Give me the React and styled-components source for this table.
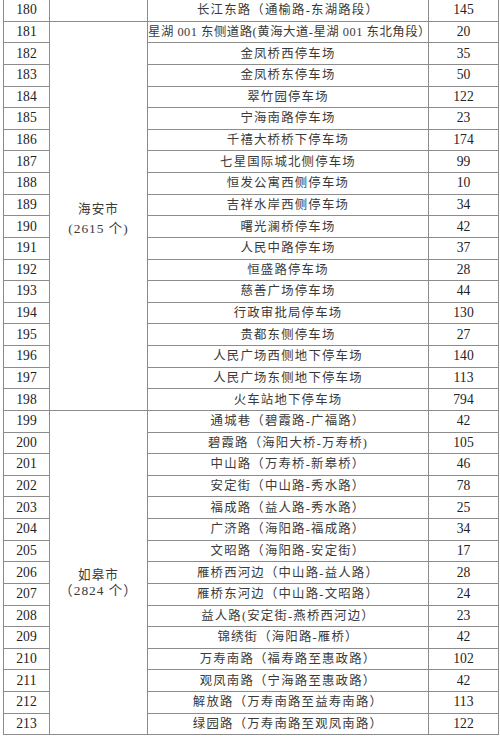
import styled, { createGlobalStyle } from "styled-components";

const GlobalStyle = createGlobalStyle`
  html, body {
    margin: 0;
    padding: 0;
    background: #fff;
  }
`;

const Page = styled.div`
  padding: 0 2px 0 3px;
  margin-top: -1px;
  font-family: "Liberation Serif", "Noto Sans CJK SC", serif;
  color: #2b2b2b;
`;

const Table = styled.table`
  width: 495px;
  border-collapse: collapse;
  table-layout: fixed;
`;

const Row = styled.tr`
  height: 21.64px;
`;

const Cell = styled.td`
  border: 1px solid #8c8c8c;
  padding: 0;
  text-align: center;
  vertical-align: middle;
  font-size: ${(p) => (p.$num ? "13.6px" : "12.4px")};
  line-height: 14px;
  white-space: nowrap;
  color: ${(p) => (p.$num ? "#222" : "#3a3a3a")};
  letter-spacing: ${(p) => p.$spacing || 0}px;
`;

const City = styled.div`
  display: flex;
  flex-direction: column;
  align-items: center;
  gap: ${(p) => p.$gap}px;
  letter-spacing: 1px;
  font-size: 12.6px;
  color: #3a3a3a;
  transform: translateY(${(p) => p.$shift}px);
`;

const CityCount = styled.span`
  font-size: 13.4px;
`;

const rows = [
  [180, "长江东路（通榆路-东湖路段）", 145],
  [181, "星湖 001 东侧道路(黄海大道-星湖 001 东北角段）", 20],
  [182, "金凤桥西停车场", 35],
  [183, "金凤桥东停车场", 50],
  [184, "翠竹园停车场", 122],
  [185, "宁海南路停车场", 23],
  [186, "千禧大桥桥下停车场", 174],
  [187, "七星国际城北侧停车场", 99],
  [188, "恒发公寓西侧停车场", 10],
  [189, "吉祥水岸西侧停车场", 34],
  [190, "曙光澜桥停车场", 42],
  [191, "人民中路停车场", 37],
  [192, "恒盛路停车场", 28],
  [193, "慈善广场停车场", 44],
  [194, "行政审批局停车场", 130],
  [195, "贵都东侧停车场", 27],
  [196, "人民广场西侧地下停车场", 140],
  [197, "人民广场东侧地下停车场", 113],
  [198, "火车站地下停车场", 794],
  [199, "通城巷（碧霞路-广福路）", 42],
  [200, "碧霞路（海阳大桥-万寿桥)", 105],
  [201, "中山路（万寿桥-新皋桥）", 46],
  [202, "安定街（中山路-秀水路）", 78],
  [203, "福成路（益人路-秀水路）", 25],
  [204, "广济路（海阳路-福成路）", 34],
  [205, "文昭路（海阳路-安定街）", 17],
  [206, "雁桥西河边（中山路-益人路）", 28],
  [207, "雁桥东河边（中山路-文昭路）", 24],
  [208, "益人路(安定街-燕桥西河边）", 23],
  [209, "锦绣街（海阳路-雁桥）", 42],
  [210, "万寿南路（福寿路至惠政路）", 102],
  [211, "观凤南路（宁海路至惠政路）", 42],
  [212, "解放路（万寿南路至益寿南路）", 113],
  [213, "绿园路（万寿南路至观凤南路）", 122],
];

const groups = {
  181: { span: 18, name: "海安市", count: "(2615 个)", gap: 6, shift: 3 },
  199: { span: 15, name: "如皋市", count: "（2824 个）", gap: 2, shift: 10 },
};

export default function App() {
  return (
    <Page>
      <GlobalStyle />
      <Table>
        <colgroup>
          <col style={{ width: "46px" }} />
          <col style={{ width: "98px" }} />
          <col style={{ width: "281px" }} />
          <col style={{ width: "70px" }} />
        </colgroup>
        <tbody>
          {rows.map(([no, place, num]) => {
            const g = groups[no];
            return (
              <Row key={no}>
                <Cell $num>{no}</Cell>
                {no === 180 && <Cell />}
                {g && (
                  <Cell rowSpan={g.span}>
                    <City $gap={g.gap} $shift={g.shift}>
                      <span>{g.name}</span>
                      <CityCount>{g.count}</CityCount>
                    </City>
                  </Cell>
                )}
                <Cell $spacing={no === 181 ? 0.5 : 1.2}>{place}</Cell>
                <Cell $num>{num}</Cell>
              </Row>
            );
          })}
        </tbody>
      </Table>
    </Page>
  );
}
